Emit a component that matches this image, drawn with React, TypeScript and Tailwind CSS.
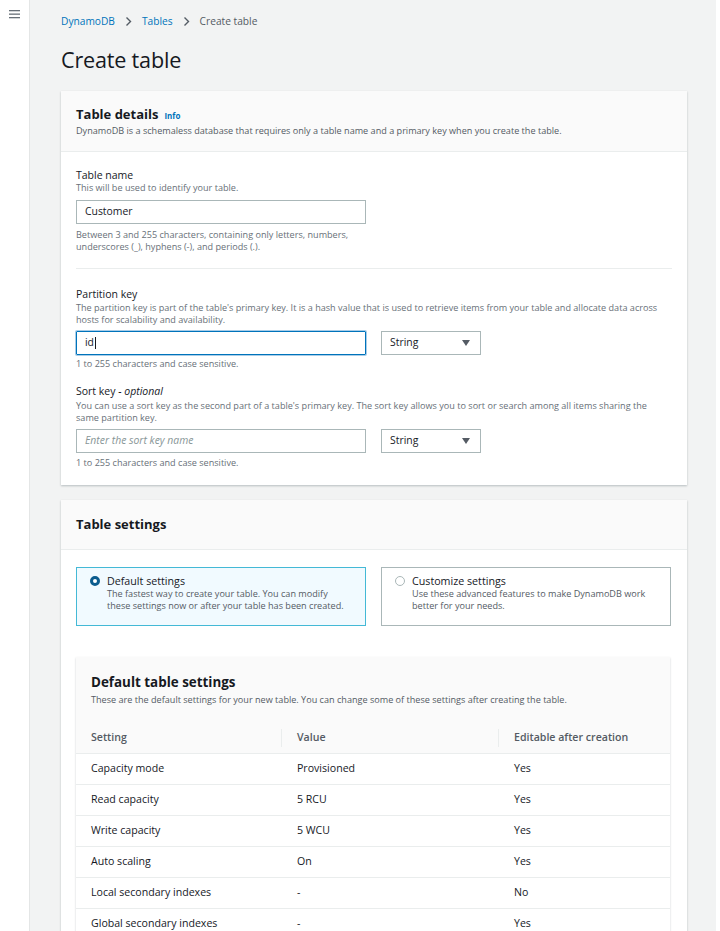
import React from 'react';

const font = { fontFamily: '"Open Sans", "Noto Sans", Arial, sans-serif' };

function Chevron() {
  return (
    <svg width="7" height="11" viewBox="0 0 7 11">
      <path d="M1.5 1.5 L5.5 5.5 L1.5 9.5" fill="none" stroke="#545b64" strokeWidth="1.4" />
    </svg>
  );
}

function SelectBox() {
  return (
    <div className="w-[100px] h-[24px] border border-[#aab7b8] bg-white flex items-center justify-between pl-[8px] pr-[10px] text-[10.4px] text-[#16191f]">
      <span>String</span>
      <svg width="8" height="6" viewBox="0 0 8 6">
        <path d="M0 0 L8 0 L4 6 Z" fill="#545b64" />
      </svg>
    </div>
  );
}

const rows = [
  ['Capacity mode', 'Provisioned', 'Yes'],
  ['Read capacity', '5 RCU', 'Yes'],
  ['Write capacity', '5 WCU', 'Yes'],
  ['Auto scaling', 'On', 'Yes'],
  ['Local secondary indexes', '-', 'No'],
  ['Global secondary indexes', '-', 'Yes'],
];

export default function App() {
  return (
    <div className="flex w-[720px] h-[931px] overflow-hidden bg-white" style={font}>
      <div className="w-[30px] shrink-0 bg-white border-r border-[#e4e6e6] pt-[9px] flex justify-center">
        <svg width="11" height="10" viewBox="0 0 11 10">
          <rect x="0" y="1" width="11" height="1.3" fill="#687078" />
          <rect x="0" y="4.5" width="11" height="1.3" fill="#687078" />
          <rect x="0" y="8" width="11" height="1.3" fill="#687078" />
        </svg>
      </div>
      <div className="w-[686px] shrink-0 bg-[#f2f3f3] pl-[31px] pr-[29px]">
        <div className="flex items-center gap-[10px] text-[10.2px] leading-[14px] pt-[14px]">
          <span className="text-[#0073bb]">DynamoDB</span>
          <Chevron />
          <span className="text-[#0073bb]">Tables</span>
          <Chevron />
          <span className="text-[#545b64]">Create table</span>
        </div>
        <h1 className="text-[21.6px] leading-[28px] text-[#16191f] mt-[18px] tracking-[-0.2px]">Create table</h1>

        {/* Table details */}
        <div className="mt-[17px] bg-white shadow-[0_1px_2px_rgba(0,28,36,0.25)]">
          <div className="bg-[#fafafa] border-b border-[#eaeded] px-[15px] pt-[14px] pb-[14px]">
            <div className="flex items-baseline gap-[6px]">
              <span className="text-[13px] leading-[18px] font-bold text-[#16191f]">Table details</span>
              <span className="text-[8px] font-bold text-[#0073bb]">Info</span>
            </div>
            <div className="text-[9.1px] leading-[12px] text-[#545b64] mt-[2px]">
              DynamoDB is a schemaless database that requires only a table name and a primary key when you create the table.
            </div>
          </div>
          <div className="px-[15px] pt-[16px] pb-[16px]">
            <div className="text-[10.5px] leading-[14px] text-[#16191f]">Table name</div>
            <div className="text-[9.1px] leading-[12px] text-[#687078]">This will be used to identify your table.</div>
            <div className="mt-[6px] w-[290px] h-[24px] border border-[#aab7b8] flex items-center px-[8px] text-[10.4px] text-[#16191f]">Customer</div>
            <div className="text-[9.1px] leading-[12px] text-[#687078] mt-[5px]">
              Between 3 and 255 characters, containing only letters, numbers,<br />underscores (_), hyphens (-), and periods (.).
            </div>
            <div className="border-t border-[#eaeded] mt-[15px]" />

            <div className="mt-[18px] text-[10.5px] leading-[14px] text-[#16191f]">Partition key</div>
            <div className="mt-[1px] text-[9.1px] leading-[12px] text-[#687078]">
              The partition key is part of the table's primary key. It is a hash value that is used to retrieve items from your table and allocate data across<br />hosts for scalability and availability.
            </div>
            <div className="mt-[5px] flex gap-[15px]">
              <div className="w-[290px] h-[24px] border border-[#0073bb] rounded-[1px] shadow-[0_0_0_1px_#a9cde8] flex items-center px-[8px] text-[10.4px] text-[#16191f]">
                id<span className="w-[1px] h-[12px] bg-[#16191f] ml-[1px]" />
              </div>
              <SelectBox />
            </div>
            <div className="text-[9.1px] leading-[12px] text-[#687078] mt-[3px]">1 to 255 characters and case sensitive.</div>

            <div className="mt-[14px] text-[10.5px] leading-[14px] text-[#16191f]">
              Sort key <span className="italic">- optional</span>
            </div>
            <div className="mt-[2px] text-[9.1px] leading-[12px] text-[#687078]">
              You can use a sort key as the second part of a table's primary key. The sort key allows you to sort or search among all items sharing the<br />same partition key.
            </div>
            <div className="mt-[5px] flex gap-[15px]">
              <div className="w-[290px] h-[24px] border border-[#aab7b8] flex items-center px-[8px] text-[10.4px] italic text-[#879596]">Enter the sort key name</div>
              <SelectBox />
            </div>
            <div className="text-[9.1px] leading-[12px] text-[#687078] mt-[4px]">1 to 255 characters and case sensitive.</div>
          </div>
        </div>

        {/* Table settings */}
        <div className="mt-[15px] bg-white shadow-[0_1px_2px_rgba(0,28,36,0.25)]">
          <div className="bg-[#fafafa] border-b border-[#eaeded] px-[15px] h-[50px] flex items-center">
            <span className="text-[13px] font-bold text-[#16191f]">Table settings</span>
          </div>
          <div className="px-[15px] pt-[17px] pb-[20px]">
            <div className="flex gap-[15px]">
              <div className="w-[290px] h-[59px] border border-[#44b9d6] bg-[#f1faff] flex gap-[7px] px-[13px] pt-[6px]">
                <span className="mt-[2px] w-[10px] h-[10px] rounded-full border-[3px] border-[#0b5c8e] bg-white shrink-0" />
                <div>
                  <div className="text-[10.7px] leading-[14px] text-[#16191f]">Default settings</div>
                  <div className="text-[9.1px] leading-[12px] text-[#545b64]">The fastest way to create your table. You can modify<br />these settings now or after your table has been created.</div>
                </div>
              </div>
              <div className="w-[290px] h-[59px] border border-[#aab7b8] bg-white flex gap-[7px] px-[13px] pt-[6px]">
                <span className="mt-[2px] w-[10px] h-[10px] rounded-full border border-[#aab7b8] bg-white shrink-0" />
                <div>
                  <div className="text-[10.7px] leading-[14px] text-[#16191f]">Customize settings</div>
                  <div className="text-[9.1px] leading-[12px] text-[#545b64]">Use these advanced features to make DynamoDB work<br />better for your needs.</div>
                </div>
              </div>
            </div>

            {/* Default table settings */}
            <div className="mt-[31px] w-[594px] bg-white shadow-[0_1px_2px_rgba(0,28,36,0.2)]">
              <div className="bg-[#fafafa] px-[15px] pt-[16px] pb-[17px]">
                <div className="text-[13.4px] leading-[18px] font-bold text-[#16191f]">Default table settings</div>
                <div className="text-[9.1px] leading-[12px] text-[#545b64] mt-[3px]">
                  These are the default settings for your new table. You can change some of these settings after creating the table.
                </div>
              </div>
              <div className="grid grid-cols-[206px_217px_171px] bg-[#fafafa] border-b border-[#eaeded] h-[31px] items-center text-[10.6px] font-semibold text-[#545b64]">
                <div className="pl-[15px] border-r border-[#eaeded] h-[18px] flex items-center">Setting</div>
                <div className="pl-[15px] border-r border-[#eaeded] h-[18px] flex items-center">Value</div>
                <div className="pl-[15px]">Editable after creation</div>
              </div>
              {rows.map((r) => (
                <div key={r[0]} className="grid grid-cols-[206px_217px_171px] border-b border-[#eaeded] h-[31px] items-center text-[10.6px] text-[#16191f]">
                  <div className="pl-[15px]">{r[0]}</div>
                  <div className="pl-[15px]">{r[1]}</div>
                  <div className="pl-[15px]">{r[2]}</div>
                </div>
              ))}
            </div>
          </div>
        </div>
      </div>
      <div className="flex-1 bg-white" />
    </div>
  );
}
